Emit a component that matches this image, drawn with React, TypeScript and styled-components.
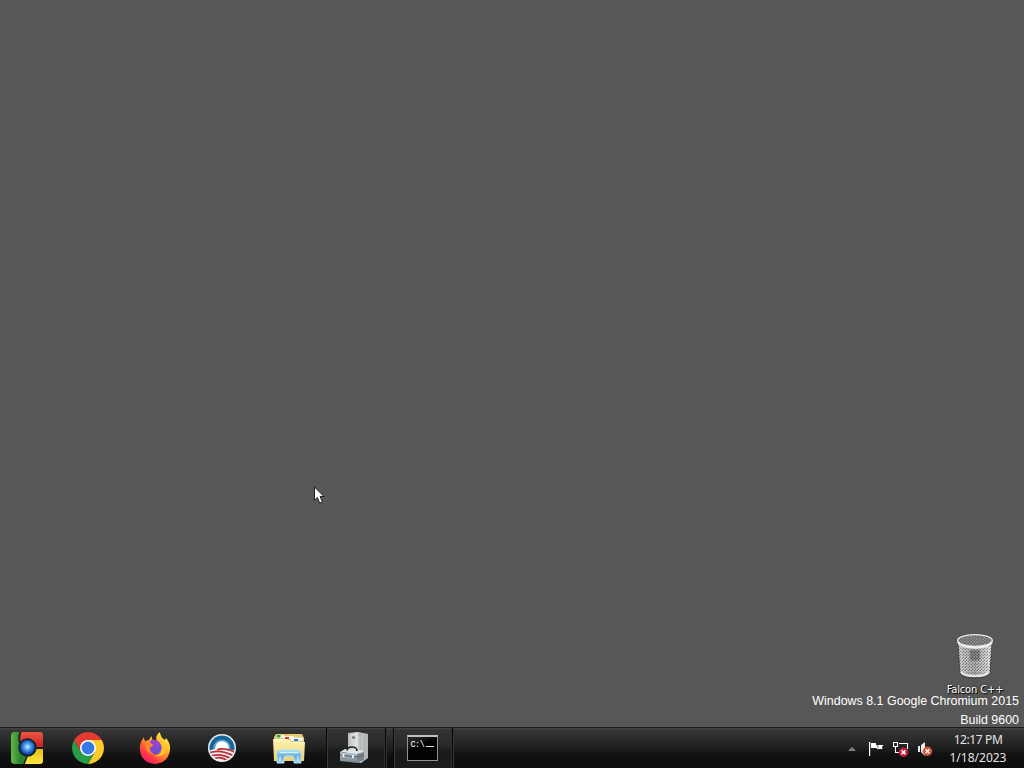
import React from "react";
import styled, { createGlobalStyle } from "styled-components";

const GlobalStyle = createGlobalStyle`
  html, body { margin: 0; padding: 0; overflow: hidden; }
  * { box-sizing: border-box; }
`;

const Screen = styled.div`
  width: 1024px;
  height: 768px;
  display: flex;
  flex-direction: column;
  overflow: hidden;
  background: #575757;
  font-family: "Noto Sans", sans-serif;
`;

const Desktop = styled.main`
  position: relative;
  flex: 1;
`;

const DesktopIcon = styled.div`
  position: absolute;
  left: 937px;
  top: 633px;
  width: 76px;
  display: flex;
  flex-direction: column;
  align-items: center;
`;

const IconLabel = styled.span`
  margin-top: 4px;
  font: 11px/14px "DejaVu Sans Condensed", "DejaVu Sans", sans-serif;
  font-stretch: condensed;
  letter-spacing: -0.12px;
  color: #fff;
  white-space: nowrap;
  text-shadow: 1px 1px 1px #000, 0 0 2px #222;
`;

const Watermark = styled.div`
  position: absolute;
  right: 5px;
  bottom: -3px;
  display: flex;
  flex-direction: column;
  align-items: flex-end;
  font: 12.45px/19px "Liberation Sans", sans-serif;
  color: #fff;
  white-space: nowrap;
`;

const Pointer = styled.svg`
  position: absolute;
  left: 313px;
  top: 486px;
`;

const Taskbar = styled.footer`
  height: 41px;
  display: flex;
  align-items: stretch;
  border-top: 1px solid #1b1b1b;
  background: linear-gradient(#474747 0, #363636 2px, #292929 12px, #1f1f1f 20px, #111 27px, #0d0d0d 100%);
`;

const Launcher = styled.div<{ $width: number }>`
  width: ${(p) => p.$width}px;
  display: flex;
  align-items: center;
  justify-content: center;
`;

const TaskButton = styled.div<{ $pad: number }>`
  width: 60px;
  margin-right: 7px;
  padding-right: ${(p) => p.$pad}px;
  display: flex;
  align-items: center;
  justify-content: center;
  border: 1px solid #080808;
  border-width: 0 1px;
  box-shadow: inset 1px 0 #3b3b3b, inset -1px 0 #303030, 1px 0 #333;
  background: linear-gradient(#484848 0, #333 2px, #292929 18px, #191919 24px, #1c1c1c 100%);
`;

const Launchers = styled.div`
  display: flex;
  width: 326px;
`;

const Tray = styled.div`
  margin-left: auto;
  display: flex;
  align-items: center;
  gap: 8px;
  padding-top: 2px;
`;

const Overflow = styled.div`
  display: flex;
  margin-right: 5px;
`;

const Clock = styled.div`
  width: 90px;
  display: flex;
  flex-direction: column;
  align-items: center;
  padding: 3px 2px 0 0;
  font: 12px/18px "Noto Sans", sans-serif;
  color: #e4e4e4;
  white-space: nowrap;
`;

const Time = styled.span`
  letter-spacing: -0.4px;
`;

const ChromiumTile = () => (
  <svg width="32" height="32" viewBox="0 0 32 32">
    <defs>
      <clipPath id="tile"><rect width="32" height="32" rx="3.5" /></clipPath>
      <radialGradient id="orb" cx=".5" cy=".45" r=".55">
        <stop offset="0" stopColor="#d0f0ff" /><stop offset=".35" stopColor="#5ca9f0" />
        <stop offset=".75" stopColor="#1b5fc4" /><stop offset="1" stopColor="#0b357c" />
      </radialGradient>
      <linearGradient id="greenSide"><stop stopColor="#66b548" /><stop offset=".3" stopColor="#27842c" /><stop offset="1" stopColor="#36953a" /></linearGradient>
      <linearGradient id="redSide" x2="0" y2="1"><stop stopColor="#ef5444" /><stop offset="1" stopColor="#c81f1c" /></linearGradient>
      <linearGradient id="yellowSide" x2="0" y2="1"><stop stopColor="#e7bb16" /><stop offset="1" stopColor="#ffe63f" /></linearGradient>
    </defs>
    <g clipPath="url(#tile)">
      <rect width="32" height="32" fill="url(#greenSide)" />
      <path d="M10 0H32V16H16L8 9Z" fill="url(#redSide)" />
      <path d="M16 16H32V32H12L15 24Z" fill="url(#yellowSide)" />
      <path d="M10-1Q7 5 9 11M32 16H25M12.5 33L16 24" stroke="#15201b" strokeWidth="1.8" fill="none" />
      <circle cx="16.5" cy="15.5" r="9.2" fill="#10212c" />
      <circle cx="16.5" cy="15.5" r="7.4" fill="url(#orb)" />
    </g>
  </svg>
);

const Chrome = () => (
  <svg width="32" height="32" viewBox="0 0 32 32">
    <path d="M2.15 8A16 16 0 0 1 29.85 8H16L9.07 20Z" fill="#e33b30" />
    <path d="M29.85 8A16 16 0 0 1 16 32L22.93 20L16 8Z" fill="#fccb28" />
    <path d="M16 32A16 16 0 0 1 2.15 8L9.07 20A8 8 0 0 0 22.93 20Z" fill="#299c49" />
    <circle cx="16" cy="16" r="8" fill="#fff" />
    <circle cx="16" cy="16" r="6.4" fill="#3478e4" />
  </svg>
);

const Firefox = () => (
  <svg width="32" height="32" viewBox="0 0 32 32">
    <defs>
      <linearGradient id="flame" x1=".85" y1=".05" x2=".2" y2=".95">
        <stop stopColor="#fff34d" /><stop offset=".32" stopColor="#ffc128" />
        <stop offset=".55" stopColor="#ff8030" /><stop offset=".78" stopColor="#ff3d45" /><stop offset="1" stopColor="#ed1968" />
      </linearGradient>
      <linearGradient id="globe" x2=".4" y2="1"><stop stopColor="#b239cb" /><stop offset="1" stopColor="#6651d3" /></linearGradient>
    </defs>
    <path d="M5 5Q5 8 6.3 9L10 8Q11 5 13 4Q12 7 15 9L18 9Q16 4 21 0Q21 5 26 8L27 6Q32 12 31 18Q29 31 16 32Q3 31 1 19Q0 11 5 5Z" fill="url(#flame)" />
    <path d="M11 9Q14 7 18 8.5Q23 11 22.5 17Q21 22.5 16 22.5Q10 21.5 10 16L13 14Q15 13 11 12Z" fill="url(#globe)" />
    <path d="M18 8Q24 10 23.5 17Q22 24 15 24Q25 26 27 18Q27 11 22 7Q19 5 20 1Q16 4 18 8Z" fill="#ffc436" />
    <path d="M7 12Q10 10 14 12.5Q13.5 15 11 15Q10 20 15 22Q9 22 7 17Z" fill="#ff8a25" />
  </svg>
);

const RisingSun = () => (
  <svg width="28" height="28" viewBox="0 0 28 28">
    <defs><clipPath id="seal"><circle cx="14" cy="14" r="12.5" /></clipPath></defs>
    <circle cx="14" cy="14" r="14" fill="#e9edef" />
    <g clipPath="url(#seal)">
      <rect width="28" height="19" fill="#17659b" />
      <circle cx="14" cy="14" r="8.6" fill="#65a5ca" />
      <circle cx="14" cy="14" r="6.8" fill="#fff" />
      <path d="M0 17Q11 12 28 17V28H0Z" fill="#f5eeee" />
      <path d="M9 15.5Q19 13.5 28 19M0 19.5Q11 14 28 23M0 23.5Q10 17 26 26M4 26Q11 20.5 21 27.5" stroke="#bc3036" strokeWidth="1.7" fill="none" />
    </g>
  </svg>
);

const Explorer = () => (
  <svg width="34" height="32" viewBox="0 0 34 32">
    <defs>
      <linearGradient id="folder" x2="0" y2="1"><stop stopColor="#fff4b4" /><stop offset="1" stopColor="#eed06d" /></linearGradient>
      <linearGradient id="stand" x2="0" y2="1"><stop stopColor="#b9e7fa" /><stop offset=".5" stopColor="#64acd9" /><stop offset="1" stopColor="#a4dcf2" /></linearGradient>
    </defs>
    <path d="M2 5L4 2H30L32 6V28H2Z" fill="#e6ca70" />
    <path d="M5 3H12V6H5Z" fill="#f6f5dc" /><path d="M5 3H8.5V5.5H5Z" fill="#18a54b" />
    <path d="M12 4H22V7H12Z" fill="#fff5dc" /><path d="M13 5H17V7H13Z" fill="#d53c23" />
    <path d="M19 5.5H31V9H19Z" fill="#edf6fb" /><path d="M22 7H26V9H22Z" fill="#247bd1" />
    <path d="M1 7H15L19 10H33L32 29H2Z" fill="url(#folder)" />
    <path d="M1.5 7.5H15L19 10.5H32.5" stroke="#fffbd0" fill="none" />
    <path d="M5 31V21Q5 18 8 18H26Q29 18 29 21V31H22V26Q22 24 20 24H14Q12 24 12 26V31Z" fill="url(#stand)" stroke="#a7e0f3" />
    <path d="M8 20.5H26M8 24V29M26 24V29" stroke="#d5f4ff" strokeWidth="1.2" />
  </svg>
);

const ServerManager = () => (
  <svg width="31" height="32" viewBox="0 0 31 32">
    <defs>
      <linearGradient id="tower"><stop stopColor="#b5b9b6" /><stop offset=".4" stopColor="#e5e7e3" /><stop offset="1" stopColor="#a9afae" /></linearGradient>
      <linearGradient id="case" x2="0" y2="1"><stop stopColor="#b8c5cc" /><stop offset="1" stopColor="#75838c" /></linearGradient>
    </defs>
    <path d="M9 1L19 0L29 2V26L22 31L9 28Z" fill="url(#tower)" />
    <path d="M19 1L29 2V26L19 30Z" fill="#b4b9b7" /><path d="M20 4V26M23 3V27" stroke="#c8cdc8" />
    <rect x="12" y="3" width="5" height="7" fill="#d4d5d0" /><circle cx="14.5" cy="5.5" r="1.3" fill="#61645f" />
    <path d="M1 20L6 17L22 18L25 20L18 22Z" fill="#dce5e8" />
    <path d="M1 20L18 22V31L1 29Z" fill="url(#case)" /><path d="M18 22L25 20V28L18 31Z" fill="#7a878e" />
    <path d="M8 18.5Q8 15 13 15Q18 15 18 19" stroke="#24282a" strokeWidth="1.7" fill="none" />
    <path d="M1 23L18 25L25 23" stroke="#56636b" fill="none" /><path d="M4.5 22V25M14 23V26" stroke="#eff6f8" strokeWidth="1.8" />
  </svg>
);

const ConsoleWindow = styled.div`
  width: 31px;
  height: 26px;
  margin-right: 2px;
  border: 1px solid #929292;
  border-top: 2px solid #c0c0c0;
  background: linear-gradient(155deg, #242424 15%, #020202 40%);
  display: flex;
  align-items: flex-start;
  padding: 3px 0 0 3px;
  color: #fff;
  font: 8.5px/10px "Liberation Mono", monospace;
  letter-spacing: -0.5px;
`;

const PromptCaret = styled.span`
  width: 8px;
  height: 1px;
  margin: 6px 0 0 2px;
  background: #e4e4e4;
`;

const RecycleBin = () => (
  <svg width="38" height="46" viewBox="0 0 38 46">
    <defs>
      <linearGradient id="metal"><stop stopColor="#c9c9c9" /><stop offset=".2" stopColor="#a4a4a4" /><stop offset=".5" stopColor="#8e8e8e" /><stop offset=".8" stopColor="#b9b9b9" /><stop offset="1" stopColor="#e2e2e2" /></linearGradient>
      <pattern id="mesh" width="3" height="3" patternUnits="userSpaceOnUse"><path d="M0 0L3 3M3 0L0 3" stroke="#eee" strokeWidth=".45" opacity=".7" /><path d="M1.5 0V.8M0 1.5H.8" stroke="#494949" opacity=".6" /></pattern>
    </defs>
    <path d="M2 9L4 40Q7 45 19 45Q31 45 34 40L36 9Z" fill="url(#metal)" stroke="#373737" />
    <path d="M2 9L4 40Q19 47 34 40L36 9Z" fill="url(#mesh)" />
    <path d="M14 17H24V27Q19 28 14 27Z" fill="#444" opacity=".45" />
    <ellipse cx="19" cy="7.5" rx="17.3" ry="5.8" fill="#6b6b6b" stroke="#eee" strokeWidth="1.3" />
    <ellipse cx="19" cy="7.5" rx="16" ry="5" fill="url(#mesh)" opacity=".7" />
    <path d="M2 9Q5 14.5 19 14.5Q33 14.5 36 9" stroke="#ededed" strokeWidth="2.4" fill="none" />
    <path d="M5 39Q8 43 19 43Q30 43 33 39" stroke="#e2e2e2" strokeWidth="2.2" fill="none" />
  </svg>
);

const HiddenArrow = () => (
  <svg width="8" height="6" viewBox="0 0 8 6"><path d="M4 1.5L7.2 4.5H.8Z" fill="#777" stroke="#aaa" strokeWidth=".6" /></svg>
);

const Flag = () => (
  <svg width="16" height="16" viewBox="0 0 16 16"><path d="M0 1H1.2V15H0Z" fill="#fff" /><path d="M2 2H7V4H14.5L13 6L13.5 8H8.5L7 7H2Z" fill="#fff" /><path d="M7.5 4L9 5V7" stroke="#666" fill="none" /></svg>
);

const Network = () => (
  <svg width="17" height="16" viewBox="0 0 17 16">
    <path d="M.5 1.5H4.5V5.5H.5ZM2.5 5.5V12M6 2.5H14.5V8M2 11.5H7" stroke="#fff" strokeWidth="1.1" fill="none" />
    <circle cx="10.5" cy="11.2" r="4.7" fill="#c82043" /><path d="M8.6 9.3L12.4 13.1M12.4 9.3L8.6 13.1" stroke="#fff" strokeWidth="1.5" />
  </svg>
);

const Volume = () => (
  <svg width="16" height="16" viewBox="0 0 16 16">
    <path d="M0 5H2V11H0ZM3 4L7 1V15L3 11Z" fill="#eee" />
    <circle cx="9.5" cy="10.3" r="4.7" fill="#d45334" /><path d="M7.6 8.4L11.4 12.2M11.4 8.4L7.6 12.2" stroke="#fff" strokeWidth="1.5" />
  </svg>
);

export default function App() {
  return (
    <Screen>
      <GlobalStyle />
      <Desktop>
        <Pointer width="13" height="20" viewBox="0 0 13 20">
          <path d="M1.5 1V14.2L4.4 11.5L6.7 17L9.4 15.9L7.1 10.5H11Z" fill="#fff" stroke="#202020" />
        </Pointer>
        <DesktopIcon><RecycleBin /><IconLabel>Falcon C++</IconLabel></DesktopIcon>
        <Watermark>
          <span>Windows 8.1 Google Chromium 2015</span>
          <span>Build 9600</span>
        </Watermark>
      </Desktop>
      <Taskbar>
        <Launchers>
          <Launcher $width={54}><ChromiumTile /></Launcher>
          <Launcher $width={68}><Chrome /></Launcher>
          <Launcher $width={66}><Firefox /></Launcher>
          <Launcher $width={68}><RisingSun /></Launcher>
          <Launcher $width={66}><Explorer /></Launcher>
        </Launchers>
        <TaskButton $pad={4}><ServerManager /></TaskButton>
        <TaskButton $pad={0}>
          <ConsoleWindow>C:\<PromptCaret /></ConsoleWindow>
        </TaskButton>
        <Tray>
          <Overflow><HiddenArrow /></Overflow>
          <Flag /><Network /><Volume />
        </Tray>
        <Clock><Time>12:17 PM</Time><span>1/18/2023</span></Clock>
      </Taskbar>
    </Screen>
  );
}
